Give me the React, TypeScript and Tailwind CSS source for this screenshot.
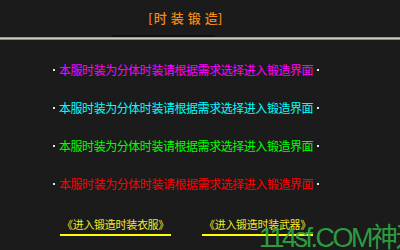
import React from "react";

const cjk = { fontFamily: '"Noto Sans CJK SC", "Noto Sans", sans-serif' };

function Row({ color }: { color: string }) {
  return (
    <div className="flex h-[38px] items-center pl-[53px]">
      <div className="h-[2px] w-[2px] bg-[#e8e8e8]" />
      <span className={`ml-[4px] text-[12px] leading-[14px] tracking-[-0.45px] ${color}`} style={cjk}>
        本服时装为分体时装请根据需求选择进入锻造界面
      </span>
      <div className="ml-[4px] h-[2px] w-[2px] bg-[#e8e8e8]" />
    </div>
  );
}

export default function App() {
  return (
    <div className="relative h-[250px] w-[400px] overflow-hidden bg-[#1b1b1b]" style={cjk}>
      <div className="flex h-[35px] items-center pl-[148px] pt-[1px] text-[13px] font-medium leading-[16px] text-[#f58a10]">
        <span>[</span>
        <span className="ml-[1px]">时</span>
        <span className="ml-[4px]">装</span>
        <span className="ml-[4px]">锻</span>
        <span className="ml-[4px]">造</span>
        <span>]</span>
      </div>
      <div className="ml-[112px] h-[2px] w-[103px] bg-[#101010]" />
      <div className="h-[1px] w-full bg-[#9c988c]" />
      <div className="h-[1px] w-full bg-[#d2cec2]" />
      <div className="h-[1px] w-full bg-[#8a8678]" />
      <div className="pt-[11px]">
        <Row color="text-[#ff00ff]" />
        <Row color="text-[#00ffff]" />
        <Row color="text-[#00ff00]" />
        <Row color="text-[#ff0000]" />
      </div>
      <div className="mt-[13px] flex pl-[60px] text-[11px] leading-[16px] tracking-[-0.3px] text-[#f2ea2a]">
        <span className="border-b-2 border-[#ffff00] px-[2px] pb-[2px]">《进入锻造时装衣服》</span>
        <span className="ml-[31px] border-b-2 border-[#ffff00] px-[2px] pb-[2px]">《进入锻造时装武器》</span>
      </div>
      <div
        className="absolute left-[259px] top-[222px] whitespace-nowrap text-[27px] leading-[32px] tracking-[-2.5px] text-[#2fae44]/90"
        style={{ fontFamily: '"Liberation Sans", "Noto Sans CJK SC", sans-serif' }}
      >
        114sf.COM神途
      </div>
    </div>
  );
}
